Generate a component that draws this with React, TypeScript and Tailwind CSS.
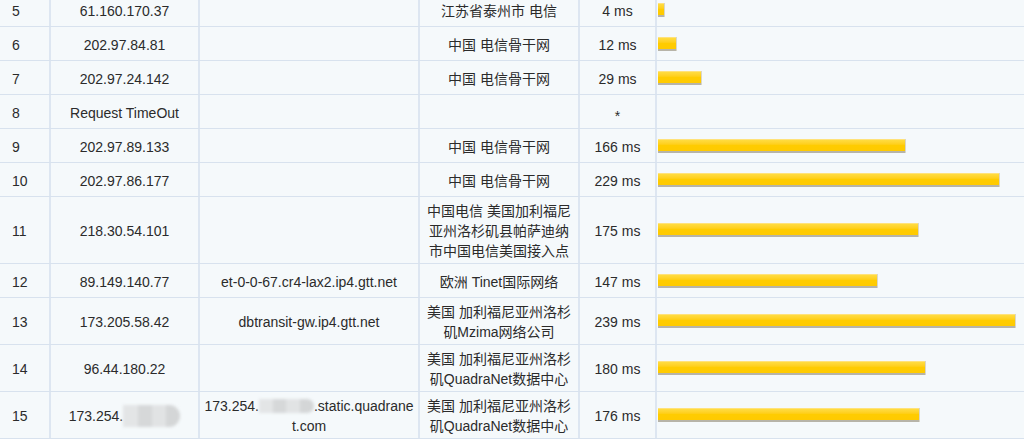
import type { ReactNode } from "react";

type Hop = {
  n: number;
  ip: ReactNode;
  host: ReactNode;
  loc: string[];
  ms: ReactNode;
  bar: number;
};

// blurred patch standing in for the redacted part of an address
function Redacted({ tall }: { tall?: boolean }) {
  return (
    <span
      className={`inline-flex align-middle blur-[1.5px] ${
        tall ? "h-[22px] w-[57px]" : "h-[14px] w-[55px]"
      }`}
    >
      <span className="h-full flex-1 bg-[#e3e5e6]" />
      <span className="h-full flex-1 bg-[#d6d8d9]" />
      <span className="h-full flex-1 bg-[#e1e3e4]" />
      <span className="h-full flex-1 bg-[#d4d6d7] rounded-r-full" />
    </span>
  );
}

const hops: Hop[] = [
  { n: 5, ip: "61.160.170.37", host: "", loc: ["江苏省泰州市 电信"], ms: "4 ms", bar: 6 },
  { n: 6, ip: "202.97.84.81", host: "", loc: ["中国 电信骨干网"], ms: "12 ms", bar: 18 },
  { n: 7, ip: "202.97.24.142", host: "", loc: ["中国 电信骨干网"], ms: "29 ms", bar: 43 },
  {
    n: 8,
    ip: "Request TimeOut",
    host: "",
    loc: [],
    ms: <span className="translate-y-[3px]">*</span>,
    bar: 0,
  },
  { n: 9, ip: "202.97.89.133", host: "", loc: ["中国 电信骨干网"], ms: "166 ms", bar: 247 },
  { n: 10, ip: "202.97.86.177", host: "", loc: ["中国 电信骨干网"], ms: "229 ms", bar: 341 },
  {
    n: 11,
    ip: "218.30.54.101",
    host: "",
    loc: ["中国电信 美国加利福尼", "亚州洛杉矶县帕萨迪纳", "市中国电信美国接入点"],
    ms: "175 ms",
    bar: 260,
  },
  {
    n: 12,
    ip: "89.149.140.77",
    host: "et-0-0-67.cr4-lax2.ip4.gtt.net",
    loc: ["欧洲 Tinet国际网络"],
    ms: "147 ms",
    bar: 219,
  },
  {
    n: 13,
    ip: "173.205.58.42",
    host: "dbtransit-gw.ip4.gtt.net",
    loc: ["美国 加利福尼亚州洛杉", "矶Mzima网络公司"],
    ms: "239 ms",
    bar: 357,
  },
  {
    n: 14,
    ip: "96.44.180.22",
    host: "",
    loc: ["美国 加利福尼亚州洛杉", "矶QuadraNet数据中心"],
    ms: "180 ms",
    bar: 267,
  },
  {
    n: 15,
    ip: (
      <span className="inline-flex items-center">
        173.254.
        <Redacted tall />
      </span>
    ),
    host: (
      <>
        <span className="inline-flex items-center">
          173.254.
          <Redacted />
          .static.quadrane
        </span>
        <br />
        t.com
      </>
    ),
    loc: ["美国 加利福尼亚州洛杉", "矶QuadraNet数据中心"],
    ms: "176 ms",
    bar: 261,
  },
];

const cell =
  "flex min-h-[33px] items-center justify-center pt-[4px] pb-[2px] text-center border-r-2 border-[#dde6f1]";

export default function App() {
  return (
    <div className="h-[439px] w-[1024px] overflow-hidden bg-[#f5f9fb] font-['Liberation_Sans','Noto_Sans_CJK_SC',sans-serif] text-[14px] leading-5 text-[#2b2b2b]">
      <div className="-mt-[7px]">
        {hops.map((h) => (
          <div
            key={h.n}
            className="grid grid-cols-[51px_149px_220px_160px_77px_1fr] border-b border-[#d8e2ee]"
          >
            <div className={`${cell} justify-start pl-3`}>{h.n}</div>
            <div className={cell}>{h.ip}</div>
            <div className={`${cell} px-1`}>
              <span>{h.host}</span>
            </div>
            <div className={`${cell} px-1`}>
              <span>
                {h.loc.map((line, i) => (
                  <span key={i} className="block whitespace-nowrap">
                    {line}
                  </span>
                ))}
              </span>
            </div>
            <div className={cell}>{h.ms}</div>
            {/* latency bar */}
            <div className="flex items-center pl-px">
              {h.bar > 0 && (
                <div
                  className="h-[14px] border-t border-b-2 border-t-[#ffe27a] border-b-[#b7b4a8] bg-gradient-to-b from-[#ffdc40] via-[#ffcc00] to-[#ffca00] shadow-[1px_0_0_#d9d6c8]"
                  style={{ width: h.bar }}
                />
              )}
            </div>
          </div>
        ))}
      </div>
    </div>
  );
}
